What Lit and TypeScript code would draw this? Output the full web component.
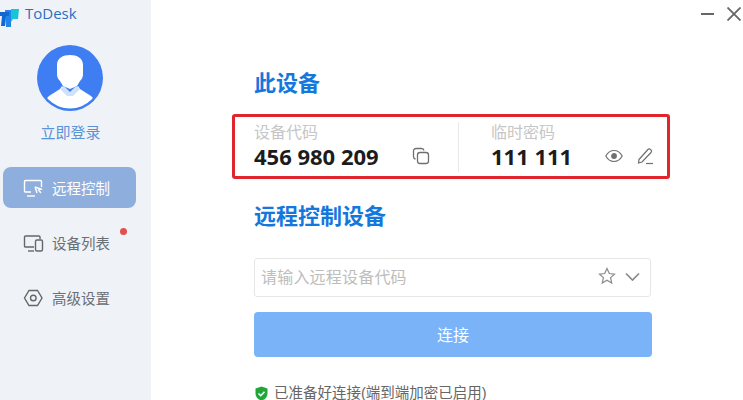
import { LitElement, html, css } from "lit";
import { customElement } from "lit/decorators.js";

@customElement("app-root")
export class AppRoot extends LitElement {
  static styles = css`
    :host { display: block; width: 743px; height: 400px; overflow: hidden; background: #fff; font-family: "Liberation Sans", "Noto Sans CJK SC", sans-serif; }
    .app { display: flex; height: 400px; }
    .side { width: 151px; flex: none; background: #eff3f8; display: flex; flex-direction: column; }
    .brand { display: flex; align-items: center; height: 29px; gap: 5px; }
    .brand svg { flex: none; }
    .brand span { font: 15px/1 "Open Sans", sans-serif; color: #2b6fc0; position: relative; top: -1px; }
    .avatar { margin: 16px 0 0 37px; width: 66px; height: 66px; }
    .login { margin-top: 12px; width: 141px; text-align: center; font-size: 15px; line-height: 20px; color: #5a92d6; }
    .nav { margin: 24px 0 0 3px; width: 133px; display: flex; flex-direction: column; gap: 14px; }
    .item { position: relative; height: 41px; display: flex; align-items: center; gap: 8px; padding-left: 20px; border-radius: 8px; font-size: 14.500px; color: #6a6f76; box-sizing: border-box; }
    .item.on { background: #8eaedd; color: #fff; }
    .dot { position: absolute; left: 117px; top: 6px; width: 7px; height: 7px; border-radius: 50%; background: #e25050; }
    .main { flex: 1; min-width: 0; padding: 0 0 0 81px; display: flex; flex-direction: column; position: relative; }
    .main > * { flex: none; }
    .win { position: absolute; right: 0; top: 0; display: flex; gap: 12px; padding: 7px 2px 0 0; }
    h2 { margin: 0 0 0 22px; font-size: 22px; line-height: 30px; font-weight: 700; color: #1477de; }
    .t1 { margin-top: 69px; }
    .t2 { margin-top: 23px; }
    .box { margin-top: 15px; width: 438px; height: 65px; box-sizing: border-box; border: 3px solid #e1252c; border-radius: 3px; display: flex; align-items: center; }
    .cell { display: flex; flex-direction: column; padding: 0 0 2px 19px; box-sizing: border-box; height: 50px; position: relative; justify-content: flex-end; }
    .c1 { width: 224px; border-right: 1px solid #e8e8e8; }
    .c2 { flex: 1; padding-left: 32px; }
    .lab { font-size: 16px; line-height: 20px; color: #c6c6c6; }
    .row { display: flex; align-items: center; height: 27px; }
    .num { font: 700 22px/27px "Open Sans", sans-serif; color: #1c1c1c; }
    .ic1 { margin-left: 33px; }
    .ic2 { margin-left: 33px; }
    .ic3 { margin-left: 14px; }
    .input { margin: 26px 0 0 22px; width: 397px; height: 39px; box-sizing: border-box; border: 1px solid #e6e6e6; border-radius: 3px; display: flex; align-items: center; padding: 0 10px 0 6px; font-size: 16px; letter-spacing: 0.2px; color: #bdbdbd; }
    .input span { flex: 1; padding-bottom: 4px; }
    .star { margin-bottom: 3px; }
    .chev { margin: 0 0 2px 9px; }
    .btn { margin: 15px 0 0 22px; width: 398px; height: 45px; box-sizing: border-box; padding-bottom: 2px; border-radius: 4px; background: #7ab3f8; color: #fff; font-size: 16px; display: flex; align-items: center; justify-content: center; }
    .status { margin: 26px 0 0 22px; display: flex; align-items: center; gap: 5px; font-size: 14.500px; line-height: 20px; color: #666; white-space: nowrap; }
  `;

  render() {
    return html`<div class="app">
      <aside class="side">
        <div class="brand">
          <svg width="20" height="24" viewBox="0 0 20 24"><path d="M5 7h11v9h-5v8H6z" fill="#1f86e8"/><path d="M0 9h9v4H6l-1 10H1l1-10H0z" fill="#1466d0"/><path d="M11 6h8l-1 10h-5l-2 3z" fill="#16c6d6"/></svg>
          <span>ToDesk</span>
        </div>
        <svg class="avatar" viewBox="0 0 66 66">
          <circle cx="33" cy="33" r="33" fill="#3f7df2"/>
          <clipPath id="c"><circle cx="33" cy="33" r="30.500"/></clipPath>
          <g clip-path="url(#c)">
            <path d="M20 20c0-7 6-10 13-10s13 3 13 10v9c0 3-1 5-3 7l-3 5-7 3-7-3-3-5c-2-2-3-4-3-7z" fill="#fff"/>
            <path d="M25 41l8 8 8-8 2 3 11 7 3 3v12H9V54l3-3 11-7z" fill="#fff"/>
            <path d="M27 41l6 6 6-6 4 3-7 7h-6l-7-7z" fill="#cfe2fa"/>
          </g>
        </svg>
        <div class="login">立即登录</div>
        <nav class="nav">
          <div class="item on">
            <svg width="21" height="20" viewBox="0 0 21 20" fill="none" stroke="#fff" stroke-width="1.4"><path d="M8 14H2.500a1 1 0 0 1-1-1V3.500a1 1 0 0 1 1-1h15a1 1 0 0 1 1 1V9"/><path d="M4 18h8"/><path d="M12 9l6 2-2.500 1 2.500 3M12 9l2 6"/></svg>
            <span>远程控制</span>
          </div>
          <div class="item">
            <svg width="21" height="20" viewBox="0 0 21 20" fill="none" stroke="#666" stroke-width="1.4"><path d="M11 14H2.500a1 1 0 0 1-1-1V4a1 1 0 0 1 1-1H16a1 1 0 0 1 1 1v2"/><path d="M5 18h6"/><rect x="12.500" y="7" width="7" height="11" rx="1.500"/></svg>
            <span>设备列表</span>
            <i class="dot"></i>
          </div>
          <div class="item">
            <svg width="21" height="20" viewBox="0 0 21 20" fill="none" stroke="#666" stroke-width="1.4"><path d="M6 2.500h8.500l4.500 7.500-4.500 7.500H6L1.500 10z"/><circle cx="10.300" cy="10" r="2.800"/></svg>
            <span>高级设置</span>
          </div>
        </nav>
      </aside>
      <main class="main">
        <div class="win">
          <svg width="14" height="14" viewBox="0 0 14 14"><path d="M0 7h13" stroke="#666" stroke-width="2"/></svg>
          <svg width="14" height="14" viewBox="0 0 14 14"><path d="M.5.500l13 13M13.500.500l-13 13" stroke="#666" stroke-width="1.800"/></svg>
        </div>
        <h2 class="t1">此设备</h2>
        <section class="box">
          <div class="cell c1">
            <div class="lab">设备代码</div>
            <div class="row">
              <span class="num">456 980 209</span>
              <svg class="ic1" width="18" height="18" viewBox="0 0 18 18" fill="none" stroke="#6f6f6f" stroke-width="1.300"><rect x="5.500" y="5.500" width="11" height="11" rx="2.500"/><path d="M3.500 12A2.500 2.500 0 0 1 1.500 9.500V4A2.500 2.500 0 0 1 4 1.500h5.500A2.500 2.500 0 0 1 12 3.500"/></svg>
            </div>
          </div>
          <div class="cell c2">
            <div class="lab">临时密码</div>
            <div class="row">
              <span class="num">111 111</span>
              <svg class="ic2" width="18" height="14" viewBox="0 0 18 14" fill="none" stroke="#6f6f6f" stroke-width="1.200"><path d="M.8 7C3 3 6 1.500 9 1.500S15 3 17.200 7C15 11 12 12.500 9 12.500S3 11 .8 7z"/><circle cx="9" cy="7" r="2.300" fill="#6f6f6f"/></svg>
              <svg class="ic3" width="17" height="17" viewBox="0 0 17 17" fill="none" stroke="#6f6f6f" stroke-width="1.200"><path d="M2 11.500L10.500 2a2 2 0 0 1 3.500 2.500L5 14l-3.500 1z"/><path d="M9 15.500h7"/></svg>
            </div>
          </div>
        </section>
        <h2 class="t2">远程控制设备</h2>
        <div class="input">
          <span>请输入远程设备代码</span>
          <svg class="star" width="18" height="18" viewBox="0 0 18 18" fill="none" stroke="#8a8a8a" stroke-width="1.200"><path d="M9 1.500l2.300 5 5.200.6-3.900 3.500 1.100 5.400L9 13.300 4.300 16l1.100-5.400L1.500 7.100l5.200-.6z"/></svg>
          <svg class="chev" width="15" height="10" viewBox="0 0 15 10" fill="none" stroke="#8a8a8a" stroke-width="1.700"><path d="M1 1.500l6.500 6.500L14 1.500"/></svg>
        </div>
        <div class="btn">连接</div>
        <div class="status">
          <svg width="15" height="15" viewBox="0 0 15 15"><path d="M7.500.5l6 2v5c0 3.500-2.500 6-6 7-3.500-1-6-3.500-6-7v-5z" fill="#21a63a"/><path d="M4.500 7.500l2.200 2.200 3.800-4" fill="none" stroke="#fff" stroke-width="1.600"/></svg>
          <span>已准备好连接(端到端加密已启用)</span>
        </div>
      </main>
    </div>`;
  }
}
